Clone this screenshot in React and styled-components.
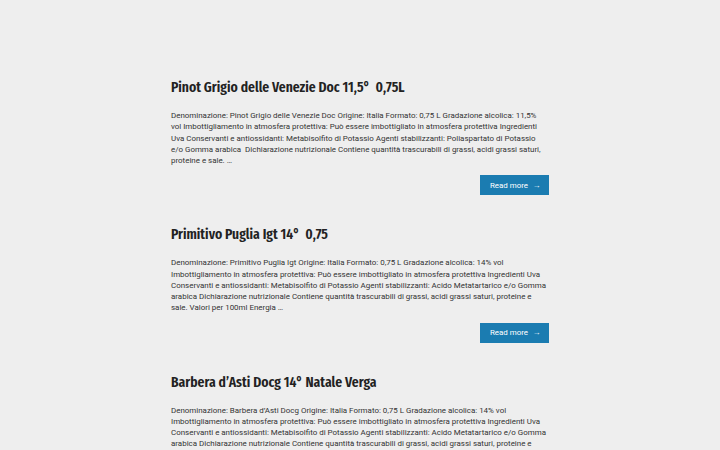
import React from "react";
import styled, { createGlobalStyle } from "styled-components";

const Global = createGlobalStyle`
  html, body { margin: 0; padding: 0; background: #eeeeee; }
  body { font-family: Roboto, "Liberation Sans", sans-serif; }
`;

const Page = styled.main`
  width: 378px;
  margin: 0 auto;
  padding-top: 76px;
  display: flex;
  flex-direction: column;
  gap: 28px;
`;

const Post = styled.article`
  display: flex;
  flex-direction: column;
`;

const Title = styled.h2`
  margin: 0 0 12px;
  font-family: "Fira Sans Extra Condensed", "Fira Sans Condensed", "Roboto Condensed", sans-serif;
  font-weight: 600;
  font-size: 14.8px;
  line-height: 22px;
  color: #222;
`;

const Excerpt = styled.p`
  margin: 0;
  padding-right: 1.5px;
  font-size: 7.95px;
  line-height: 11.25px;
  color: #333;
`;

const Actions = styled.div`
  display: flex;
  justify-content: flex-end;
  margin-top: 9px;
`;

const ReadMore = styled.a`
  display: inline-flex;
  align-items: center;
  gap: 5px;
  height: 20px;
  padding: 0 8px 0 10px;
  background: #1b7cb1;
  color: #fff;
  font-size: 7.95px;
  text-decoration: none;
`;

const posts = [
  {
    title: "Pinot Grigio delle Venezie Doc 11,5°\u00a0 0,75L",
    text: "Denominazione: Pinot Grigio delle Venezie Doc Origine: Italia Formato: 0,75 L Gradazione alcolica: 11,5% vol Imbottigliamento in atmosfera protettiva: Può essere imbottigliato in atmosfera protettiva Ingredienti Uva Conservanti e antiossidanti: Metabisolfito di Potassio Agenti stabilizzanti: Poliaspartato di Potassio e/o Gomma arabica\u00a0 Dichiarazione nutrizionale Contiene quantità trascurabili di grassi, acidi grassi saturi, proteine e sale. …",
  },
  {
    title: "Primitivo Puglia Igt 14°\u00a0 0,75",
    text: "Denominazione: Primitivo Puglia Igt Origine: Italia Formato: 0,75 L Gradazione alcolica: 14% vol Imbottigliamento in atmosfera protettiva: Può essere imbottigliato in atmosfera protettiva Ingredienti Uva Conservanti e antiossidanti: Metabisolfito di Potassio Agenti stabilizzanti: Acido Metatartarico e/o Gomma arabica Dichiarazione nutrizionale Contiene quantità trascurabili di grassi, acidi grassi saturi, proteine e sale. Valori per 100ml Energia …",
  },
  {
    title: "Barbera d’Asti Docg 14° Natale Verga",
    text: "Denominazione: Barbera d’Asti Docg Origine: Italia Formato: 0,75 L Gradazione alcolica: 14% vol Imbottigliamento in atmosfera protettiva: Può essere imbottigliato in atmosfera protettiva Ingredienti Uva Conservanti e antiossidanti: Metabisolfito di Potassio Agenti stabilizzanti: Acido Metatartarico e/o Gomma arabica Dichiarazione nutrizionale Contiene quantità trascurabili di grassi, acidi grassi saturi, proteine e sale. Valori per 100ml Energia …",
  },
];

export default function App() {
  return (
    <>
      <Global />
      <Page>
        {posts.map((p) => (
          <Post key={p.title}>
            <Title>{p.title}</Title>
            <Excerpt>{p.text}</Excerpt>
            <Actions>
              <ReadMore href="#">
                Read more <span>→</span>
              </ReadMore>
            </Actions>
          </Post>
        ))}
      </Page>
    </>
  );
}
